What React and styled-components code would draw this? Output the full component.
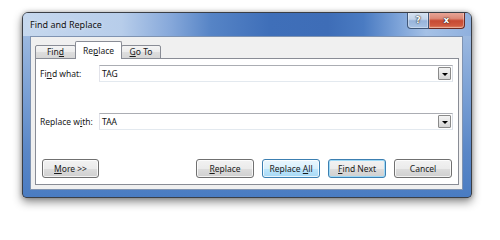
import React from "react";
import styled, { createGlobalStyle } from "styled-components";

const Global = createGlobalStyle`
  html, body { margin: 0; padding: 0; background: #fff; }
  body { font-family: "Noto Sans", "Liberation Sans", sans-serif; }
  * { box-sizing: border-box; }
`;

const Page = styled.div`
  width: 500px;
  height: 214px;
  padding: 12px 0 0 22px;
  background: #fff;
  overflow: hidden;
`;

const Window = styled.div`
  width: 450px;
  height: 186px;
  border: 1px solid #3b3f46;
  border-radius: 6px 6px 4px 4px;
  background: linear-gradient(180deg, #a9c2e4 0%, #7ea3d6 40%, #5a87c7 75%, #4a7cc2 100%);
  box-shadow: 0 4px 10px rgba(0, 0, 0, 0.45), 0 0 4px rgba(0, 0, 0, 0.25);
  display: flex;
  flex-direction: column;
  overflow: hidden;
`;

const TitleBar = styled.div`
  height: 23px;
  display: flex;
  align-items: flex-start;
  padding: 0 6px 0 7px;
  background: linear-gradient(
    90deg,
    #c6d8ee 0%,
    #b7cdea 22%,
    #86a8da 33%,
    #5684c6 42%,
    #3f6fb9 55%,
    #3e6db7 68%,
    #4a7bc2 76%,
    #7ea4d9 84%,
    #a5c1e6 90%,
    #8fb0de 100%
  );
`;

const Title = styled.div`
  flex: 1;
  font-size: 9px;
  line-height: 24px;
  color: #111;
  text-shadow: 0 0 4px rgba(255, 255, 255, 0.7);
`;

const CaptionGroup = styled.div`
  display: flex;
  margin-top: -1px;
`;

const CaptionButton = styled.div`
  width: ${(p) => p.$w}px;
  height: 17px;
  display: flex;
  align-items: center;
  justify-content: center;
  font-family: "DejaVu Sans", sans-serif;
  font-weight: bold;
  font-size: 9px;
  color: #fff;
  text-shadow: 0 0 2px #2a2a2a, 0 0 1px #000;
  border: 1px solid ${(p) => (p.$close ? "#6b2a23" : "#3f5677")};
  border-top: none;
  border-left: ${(p) => (p.$close ? "none" : undefined)};
  border-radius: ${(p) => (p.$close ? "0 0 4px 0" : "0 0 0 4px")};
  background: ${(p) =>
    p.$close
      ? "linear-gradient(180deg, #e9a99b 0%, #dd8a78 40%, #c74a33 55%, #cf5a40 85%, #e38b6a 100%)"
      : "linear-gradient(180deg, #d8e4f2 0%, #c3d4ea 45%, #98b4da 55%, #a9c3e4 100%)"};
  box-shadow: inset 0 0 0 1px rgba(255, 255, 255, 0.35);
`;

const Client = styled.div`
  flex: 1;
  margin: 0 8px 7px 7px;
  background: #f0f0f0;
  border: 1px solid #7f93b1;
  padding: 5px 3px 4px 4px;
  display: flex;
  flex-direction: column;
`;

const TabStrip = styled.div`
  display: flex;
  align-items: flex-end;
  height: 17px;
  padding-left: 1px;
  margin-bottom: -1px;
  position: relative;
  z-index: 1;
`;

const Tab = styled.div`
  width: ${(p) => p.$w}px;
  height: ${(p) => (p.$active ? 18 : 14)}px;
  margin-left: -1px;
  border: 1px solid #898c95;
  border-bottom: ${(p) => (p.$active ? "none" : "1px solid #898c95")};
  border-radius: 2px 2px 0 0;
  background: ${(p) =>
    p.$active ? "#fff" : "linear-gradient(180deg, #f4f4f4 0%, #ebebeb 50%, #dedede 51%, #d6d6d6 100%)"};
  font-size: 8.5px;
  color: #1a1a1a;
  display: flex;
  justify-content: center;
  align-items: ${(p) => (p.$active ? "flex-start" : "center")};
  padding-top: ${(p) => (p.$active ? 3 : 0)}px;
  line-height: 12px;
  position: relative;
  z-index: ${(p) => (p.$active ? 2 : 1)};
`;

const Panel = styled.div`
  flex: 1;
  background: #fff;
  border: 1px solid #898c95;
  padding: 6px 5px 6px 4px;
  display: flex;
  flex-direction: column;
`;

const FieldRow = styled.div`
  display: flex;
  align-items: center;
  margin-bottom: ${(p) => p.$mb || 0}px;
`;

const Label = styled.div`
  width: 59px;
  font-size: 8.5px;
  color: #1a1a1a;
`;

const Combo = styled.div`
  flex: 1;
  height: 17px;
  border: 1px solid;
  border-color: #abadb3 #dbdfe6 #e3e9ef #e2e3ea;
  background: #fff;
  display: flex;
  align-items: center;
  padding: 0 1px 0 2px;
  font-size: 8.5px;
  color: #111;
`;

const ComboText = styled.span`
  flex: 1;
`;

const DropButton = styled.div`
  width: 13px;
  height: 13px;
  border: 1px solid #8a8a8a;
  border-radius: 1px;
  background: linear-gradient(180deg, #f4f4f4 0%, #e6e6e6 50%, #d4d4d4 100%);
  display: flex;
  align-items: center;
  justify-content: center;
`;

const Arrow = styled.div`
  width: 0;
  height: 0;
  border-left: 3px solid transparent;
  border-right: 3px solid transparent;
  border-top: 3px solid #000;
  margin-top: 1px;
`;

const ButtonRow = styled.div`
  margin-top: auto;
  display: flex;
  gap: 8px;
  padding: 0 1px 0 2px;
`;

const Spacer = styled.div`
  flex: 1;
`;

const Button = styled.div`
  width: ${(p) => p.$w || 58}px;
  height: 19px;
  border-radius: 3px;
  font-size: 8.5px;
  color: #1a1a1a;
  display: flex;
  align-items: center;
  justify-content: center;
  white-space: pre;
  border: 1px solid ${(p) => (p.$kind === "hover" || p.$kind === "default" ? "#3c7fb1" : "#707070")};
  background: ${(p) =>
    p.$kind === "hover"
      ? "linear-gradient(180deg, #eaf6fd 0%, #d9f0fc 50%, #bee6fd 51%, #a7d9f5 100%)"
      : "linear-gradient(180deg, #f2f2f2 0%, #ebebeb 50%, #dddddd 51%, #cfcfcf 100%)"};
  box-shadow: ${(p) =>
    p.$kind === "default"
      ? "inset 0 0 0 1px #9fdaf7"
      : "inset 0 0 0 1px rgba(255,255,255,0.75)"};
`;

const Caption = styled.span`
  white-space: pre;
`;

const U = styled.span`
  text-decoration: underline;
  text-underline-offset: 1px;
`;

export default function App() {
  return (
    <>
      <Global />
      <Page>
        <Window>
          <TitleBar>
            <Title>Find and Replace</Title>
            <CaptionGroup>
              <CaptionButton $w={22}>?</CaptionButton>
              <CaptionButton $w={36} $close>
                x
              </CaptionButton>
            </CaptionGroup>
          </TitleBar>
          <Client>
            <TabStrip>
              <Tab $w={41}>
                <Caption>
                  Fin<U>d</U>
                </Caption>
              </Tab>
              <Tab $w={47} $active>
                <Caption>
                  Re<U>p</U>lace
                </Caption>
              </Tab>
              <Tab $w={40}>
                <Caption>
                  <U>G</U>o To
                </Caption>
              </Tab>
            </TabStrip>
            <Panel>
              <FieldRow $mb={31}>
                <Label>
                  Fi<U>n</U>d what:
                </Label>
                <Combo>
                  <ComboText>TAG</ComboText>
                  <DropButton>
                    <Arrow />
                  </DropButton>
                </Combo>
              </FieldRow>
              <FieldRow>
                <Label>
                  Replace w<U>i</U>th:
                </Label>
                <Combo>
                  <ComboText>TAA</ComboText>
                  <DropButton>
                    <Arrow />
                  </DropButton>
                </Combo>
              </FieldRow>
              <ButtonRow>
                <Button $w={57}>
                  <Caption>
                    <U>M</U>ore &gt;&gt;
                  </Caption>
                </Button>
                <Spacer />
                <Button>
                  <Caption>
                    <U>R</U>eplace
                  </Caption>
                </Button>
                <Button $kind="hover">
                  <Caption>
                    Replace <U>A</U>ll
                  </Caption>
                </Button>
                <Button $kind="default">
                  <Caption>
                    <U>F</U>ind Next
                  </Caption>
                </Button>
                <Button>
                  <Caption>Cancel</Caption>
                </Button>
              </ButtonRow>
            </Panel>
          </Client>
        </Window>
      </Page>
    </>
  );
}
